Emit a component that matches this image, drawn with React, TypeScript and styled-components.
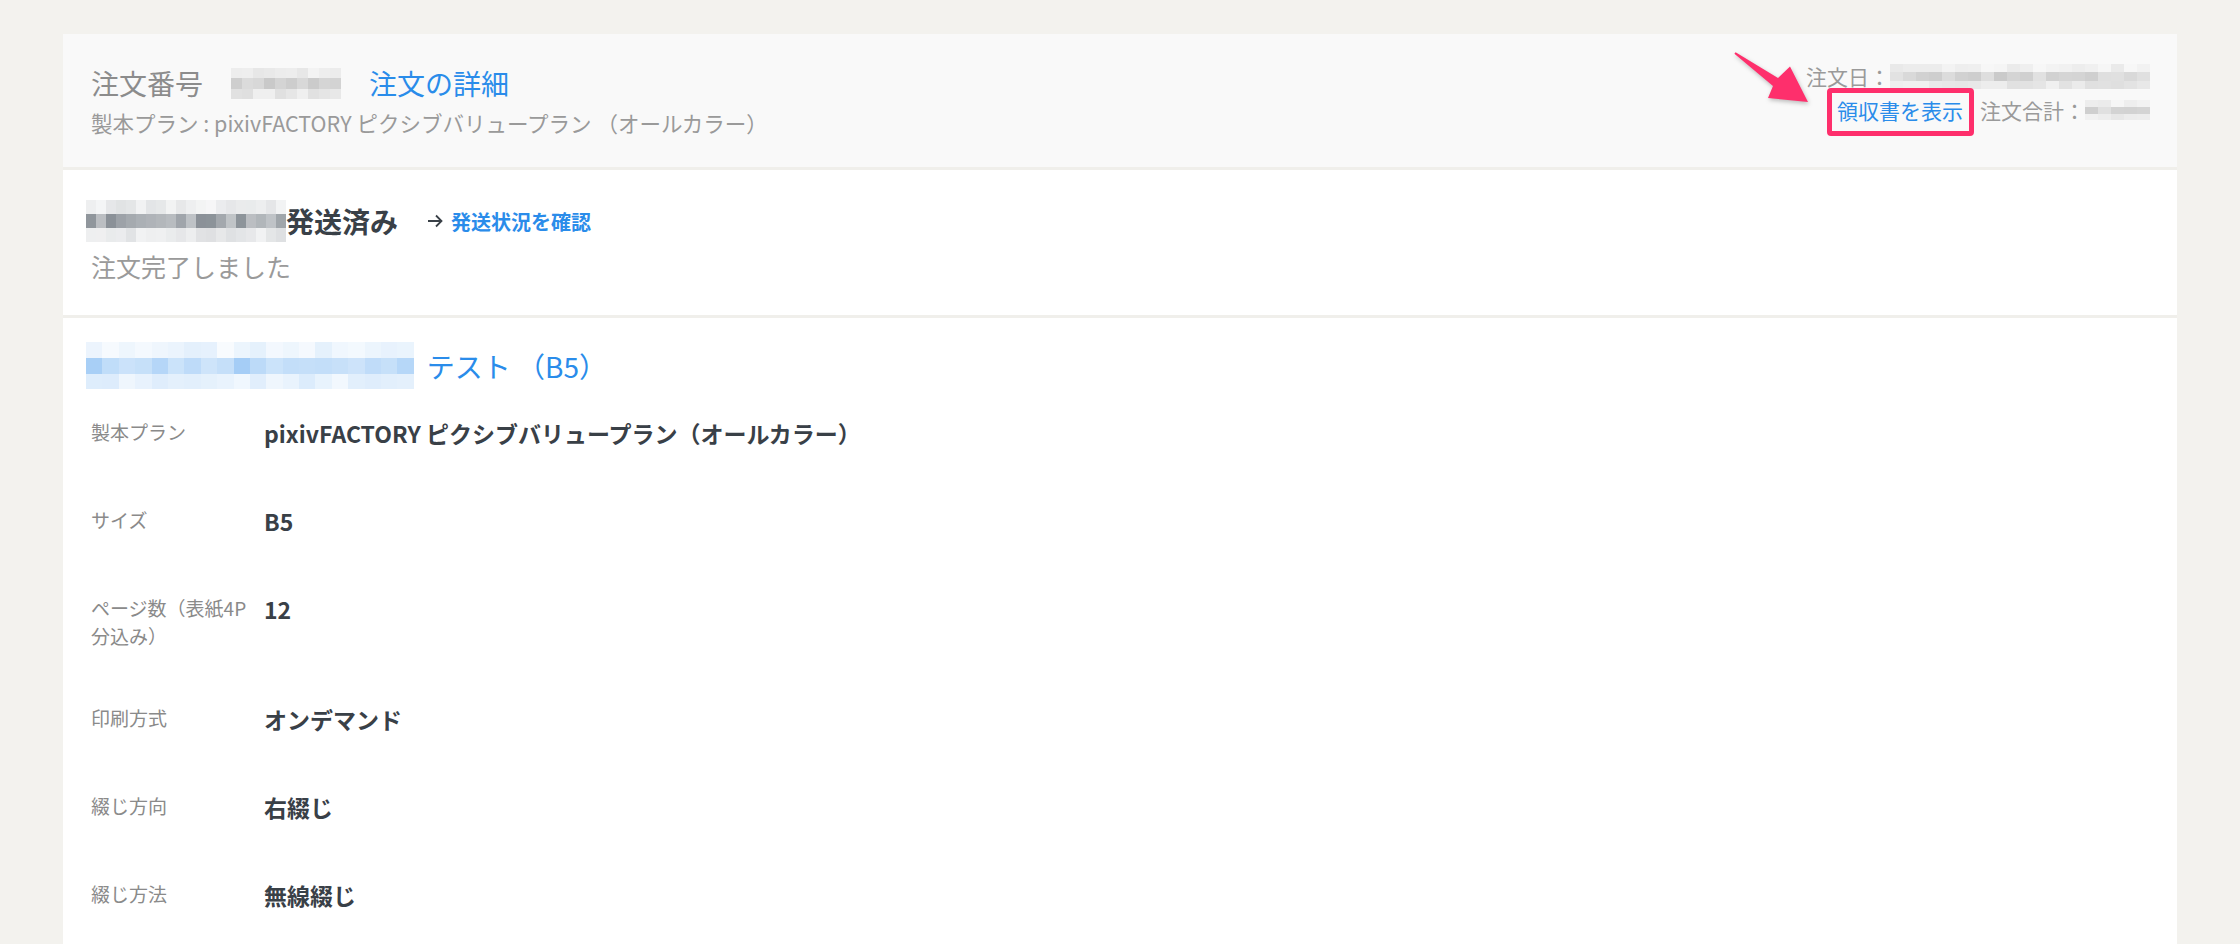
import React from "react";
import styled, { createGlobalStyle } from "styled-components";

const GlobalStyle = createGlobalStyle`
  html, body {
    margin: 0;
    padding: 0;
    background: #f3f2ee;
  }
  body {
    font-family: "Noto Sans CJK JP", "Noto Sans", sans-serif;
  }
`;

// blurred (pixelated) placeholders for the personal data in the screenshot
type MosaicSpec = {
  cols: number;
  cell: number;
  rows: number[];
  tones: [number, number][];
  hue: number;
  sat: number;
  seed: number;
};

const makeRand = (seed: number) => {
  let s = seed;
  return () => {
    s = (s * 9301 + 49297) % 233280;
    return s / 233280;
  };
};

function Mosaic({ spec, className }: { spec: MosaicSpec; className?: string }) {
  const rand = makeRand(spec.seed);
  const tiles: string[] = [];
  spec.rows.forEach((_, r) => {
    const [lo, hi] = spec.tones[r];
    for (let c = 0; c < spec.cols; c++) {
      const l = lo + (hi - lo) * rand();
      tiles.push(`hsl(${spec.hue}, ${spec.sat}%, ${l.toFixed(1)}%)`);
    }
  });
  return (
    <MosaicGrid
      className={className}
      $cols={spec.cols}
      $cell={spec.cell}
      $rows={spec.rows.map((h) => `${h}px`).join(" ")}
    >
      {tiles.map((bg, i) => (
        <Tile key={i} $bg={bg} />
      ))}
    </MosaicGrid>
  );
}

const orderNoMosaic: MosaicSpec = {
  cols: 10, cell: 11, rows: [10, 11, 10],
  tones: [[90, 96], [78, 88], [87, 94]], hue: 0, sat: 0, seed: 7,
};
const dateMosaic: MosaicSpec = {
  cols: 20, cell: 13, rows: [8, 9, 8],
  tones: [[91, 97], [79, 89], [87, 95]], hue: 0, sat: 0, seed: 21,
};
const totalMosaic: MosaicSpec = {
  cols: 5, cell: 13, rows: [7, 7, 6],
  tones: [[91, 97], [79, 88], [88, 95]], hue: 0, sat: 0, seed: 3,
};
const nameMosaic: MosaicSpec = {
  cols: 20, cell: 10, rows: [14, 14, 14],
  tones: [[88, 97], [56, 80], [86, 96]], hue: 210, sat: 6, seed: 11,
};
const bookMosaic: MosaicSpec = {
  cols: 20, cell: 16.4, rows: [16, 16, 15],
  tones: [[94, 98.5], [79, 90], [92, 97.5]], hue: 210, sat: 82, seed: 5,
};

const specs = [
  { label: "製本プラン", value: "pixivFACTORY ピクシブバリュープラン（オールカラー）" },
  { label: "サイズ", value: "B5" },
  { label: "ページ数（表紙4P分込み）", value: "12" },
  { label: "印刷方式", value: "オンデマンド" },
  { label: "綴じ方向", value: "右綴じ" },
  { label: "綴じ方法", value: "無線綴じ" },
];

export default function App() {
  return (
    <>
      <GlobalStyle />
      <Page>
        <Card>
          <Header>
            <OrderInfo>
              <OrderTitle>
                <span>注文番号</span>
                <Mosaic spec={orderNoMosaic} />
                <BlueLink href="#">注文の詳細</BlueLink>
              </OrderTitle>
              <OrderPlan>製本プラン : pixivFACTORY ピクシブバリュープラン （オールカラー）</OrderPlan>
            </OrderInfo>
            <OrderMeta>
              <MetaLine>
                注文日：
                <Mosaic spec={dateMosaic} />
              </MetaLine>
              <MetaLine>
                <ReceiptLink href="#">
                  領収書を表示
                  <PointerArrow viewBox="0 0 95 70" width="95" height="70">
                    <polygon
                      points="9.4,8.8 48,41 43,53 83,57 65,21.5 53,33 10.6,7.2"
                      fill="#fe2f6c"
                    />
                  </PointerArrow>
                </ReceiptLink>
                注文合計：
                <Mosaic spec={totalMosaic} />
              </MetaLine>
            </OrderMeta>
          </Header>

          <StatusSection>
            <StatusHeading>
              <NameMosaic spec={nameMosaic} />
              <span>発送済み</span>
              <TrackLink href="#">
                <svg width="16" height="14" viewBox="0 0 16 14">
                  <path
                    d="M1 7 H14.5 M9 1.5 L14.5 7 L9 12.5"
                    fill="none"
                    stroke="#394047"
                    strokeWidth="1.8"
                  />
                </svg>
                <span>発送状況を確認</span>
              </TrackLink>
            </StatusHeading>
            <StatusNote>注文完了しました</StatusNote>
          </StatusSection>

          <ProductSection>
            <ProductTitle>
              <NameMosaic spec={bookMosaic} />
              <ProductName>テスト （B5）</ProductName>
            </ProductTitle>
            {specs.map((s) => (
              <SpecRow key={s.label}>
                <SpecLabel>{s.label}</SpecLabel>
                <SpecValue>{s.value}</SpecValue>
              </SpecRow>
            ))}
          </ProductSection>
        </Card>
      </Page>
    </>
  );
}

const Page = styled.div`
  padding: 34px 63px 0;
  min-height: 944px;
  box-sizing: border-box;
`;

const Card = styled.div`
  background: #fff;
  min-height: 910px;
`;

const MosaicGrid = styled.div<{ $cols: number; $cell: number; $rows: string }>`
  display: grid;
  grid-template-columns: repeat(${({ $cols }) => $cols}, ${({ $cell }) => $cell}px);
  grid-template-rows: ${({ $rows }) => $rows};
  flex-shrink: 0;
`;

const Tile = styled.span<{ $bg: string }>`
  background: ${({ $bg }) => $bg};
`;

const Header = styled.div`
  display: flex;
  justify-content: space-between;
  align-items: flex-start;
  height: 136px;
  box-sizing: border-box;
  padding: 25px 27px 0 28px;
  background: #f9f9f9;
  border-bottom: 3px solid #f0efeb;
`;

const OrderInfo = styled.div`
  margin-top: 4px;
`;

const OrderTitle = styled.div`
  display: flex;
  align-items: center;
  gap: 28px;
  height: 40px;
  font-size: 28px;
  line-height: 40px;
  color: #8c8c8c;
`;

const BlueLink = styled.a`
  color: #2a8cea;
  text-decoration: none;
`;

const OrderPlan = styled.div`
  margin-top: 6px;
  font-size: 21.5px;
  line-height: 28px;
  color: #9a9a9a;
`;

const OrderMeta = styled.div`
  display: flex;
  flex-direction: column;
  align-items: flex-end;
  font-size: 21px;
  line-height: 34px;
  color: #9a9a9a;
`;

const MetaLine = styled.div`
  display: flex;
  align-items: center;
  height: 34px;
`;

const ReceiptLink = styled.a`
  position: relative;
  display: inline-block;
  margin-right: 17px;
  color: #2a8cea;
  text-decoration: none;

  &::after {
    content: "";
    position: absolute;
    top: -5px;
    bottom: -9px;
    left: -10px;
    right: -11px;
    border: 5px solid #fe2f6c;
    border-radius: 4px;
  }
`;

const PointerArrow = styled.svg`
  position: absolute;
  left: -112px;
  top: -48px;
  filter: drop-shadow(1px 2px 2px rgba(0, 0, 0, 0.25));
`;

const StatusSection = styled.div`
  padding: 31px 28px 32px;
  border-bottom: 3px solid #f0efeb;
`;

const StatusHeading = styled.div`
  display: flex;
  align-items: center;
  height: 40px;
  font-size: 28px;
  font-weight: 700;
  color: #394047;
`;

const NameMosaic = styled(Mosaic)`
  margin-left: -5px;
`;

const TrackLink = styled.a`
  display: flex;
  align-items: center;
  gap: 8px;
  margin-left: 29px;
  font-size: 20px;
  font-weight: 700;
  color: #2a8cea;
  text-decoration: none;
`;

const StatusNote = styled.div`
  margin-top: 8px;
  font-size: 25px;
  line-height: 34px;
  color: #9a9a9a;
`;

const ProductSection = styled.div`
  padding: 24px 28px 0;
`;

const ProductTitle = styled.div`
  display: flex;
  align-items: center;
  height: 47px;
`;

const ProductName = styled.span`
  margin-left: 13px;
  font-size: 28px;
  color: #2a8cea;
`;

const SpecRow = styled.div`
  display: flex;
  align-items: flex-start;
  padding: 25px 0;
`;

const SpecLabel = styled.div`
  width: 173px;
  flex-shrink: 0;
  padding-top: 4px;
  font-size: 19px;
  line-height: 28px;
  color: #8a8a8a;
`;

const SpecValue = styled.div`
  font-size: 23px;
  line-height: 38px;
  font-weight: 700;
  color: #394047;
`;
